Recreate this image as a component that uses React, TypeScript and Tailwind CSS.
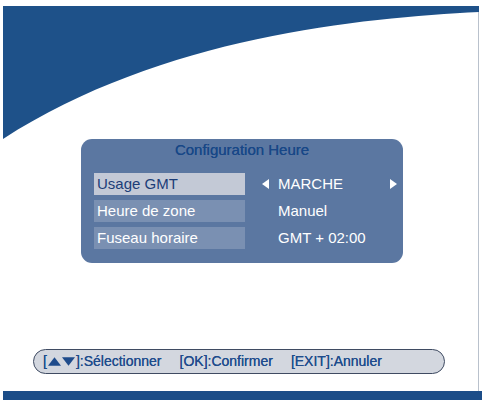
import React from 'react';

const font = { fontFamily: '"Liberation Sans", Arial, sans-serif' };

type Row = { label: string; value: string; selected?: boolean };

const ROWS: Row[] = [
  { label: 'Usage GMT', value: 'MARCHE', selected: true },
  { label: 'Heure de zone', value: 'Manuel' },
  { label: 'Fuseau horaire', value: 'GMT + 02:00' },
];

function Tri({ dir, className }: { dir: 'left' | 'right' | 'up' | 'down'; className?: string }) {
  const pts = {
    left: '7,0 7,10 0,5',
    right: '0,0 0,10 7,5',
    up: '0,8 12,8 6,0',
    down: '0,0 12,0 6,8',
  }[dir];
  const vb = dir === 'left' || dir === 'right' ? '0 0 7 10' : '0 0 12 8';
  return (
    <svg viewBox={vb} className={className} fill="currentColor">
      <polygon points={pts} />
    </svg>
  );
}

function HelpItem({ k, label }: { k: React.ReactNode; label: string }) {
  return (
    <span className="flex items-center">
      <span className="flex items-center">[{k}]</span>
      <span>:{label}</span>
    </span>
  );
}

export default function App() {
  return (
    <div className="h-[401px] w-[482px] overflow-hidden bg-white pl-[3px] pt-[6px]" style={font}>
      <div className="flex h-full flex-col">
        {/* ── Vague bleue ── */}
        <div className="mr-[3px] border-r border-[#b9c1cc]">
          <svg viewBox="0 0 476 133" className="block h-[133px] w-[476px]">
            <path d="M0 0 H477 V6 C 360 12 160 30 0 133 Z" fill="#1e5189" />
          </svg>
        </div>

        {/* ── Dialogue ── */}
        <div className="mr-[3px] flex flex-col border-r border-[#b9c1cc]">
          <div className="ml-[78px] h-[124px] w-[322px] rounded-[11px] bg-[#5b77a1] pt-[1px]">
            <div className="flex h-[20px] items-center justify-center text-[15px] text-[#184787] [text-shadow:0_0_0.4px_#184787]">
              Configuration Heure
            </div>
            <div className="mt-[13px] flex flex-col gap-[5px]">
              {ROWS.map((r) => (
                <div key={r.label} className="flex h-[22px] items-center">
                  <div
                    className={`ml-[13px] flex h-full w-[151px] items-center pl-[3px] text-[15px] ${
                      r.selected ? 'bg-[#c3c9d6] text-[#1c3d78]' : 'bg-[#7a90b2] text-white'
                    }`}
                  >
                    {r.label}
                  </div>
                  <div className="ml-[17px] flex w-[135px] items-center text-[15px] text-white">
                    <span className="flex w-[16px] items-center">
                      {r.selected && <Tri dir="left" className="h-[10px] w-[7px] text-white" />}
                    </span>
                    <span className="flex-1">{r.value}</span>
                    {r.selected && <Tri dir="right" className="h-[10px] w-[7px] text-white" />}
                  </div>
                </div>
              ))}
            </div>
          </div>

          {/* ── Aide ── */}
          <div className="mb-[17px] ml-[30px] mt-[86px] flex h-[25px] w-[412px] items-center gap-[18px] rounded-full border-[1.5px] border-[#3f4b62] bg-[#d3d7df] pl-[9px] text-[14px] text-[#1f4c8c] [text-shadow:0_0_0.4px_#1f4c8c]">
            <HelpItem
              k={
                <span className="flex items-center gap-[1px] px-[1px]">
                  <Tri dir="up" className="h-[9px] w-[13px]" />
                  <Tri dir="down" className="h-[9px] w-[13px]" />
                </span>
              }
              label="Sélectionner"
            />
            <HelpItem k="OK" label="Confirmer" />
            <HelpItem k="EXIT" label="Annuler" />
          </div>
        </div>

        {/* ── Barre du bas ── */}
        <div className="h-[9px] bg-[#1c4d88]" />
      </div>
    </div>
  );
}
